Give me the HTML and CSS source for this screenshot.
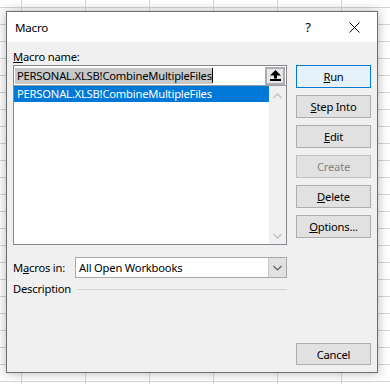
FILE: index.html
```html
<!DOCTYPE html>
<html lang="en">
<head>
    <meta charset="UTF-8">
    <title>Macro</title>
    <link rel="stylesheet" href="styles.css">
</head>
<body>
    <div class="dialog">
        <div class="titlebar">
            <span class="title">Macro</span>
            <span class="tb-btn help">?</span>
            <span class="tb-btn close">
                <svg width="11" height="11" viewBox="0 0 11 11"><path d="M0.5 0.5 L10.5 10.5 M10.5 0.5 L0.5 10.5" stroke="#000" stroke-width="1" fill="none"/></svg>
            </span>
        </div>
        <div class="content">
            <div class="left">
                <div class="label"><u>M</u>acro name:</div>
                <div class="combo">
                    <div class="edit">
                        <span class="sel">PERSONAL.XLSB!CombineMultipleFiles</span><span class="caret"></span>
                        <span class="upbtn">
                            <svg width="11" height="11" viewBox="0 0 11 11"><path d="M5.5 0 L11 5.5 H7 V8.5 H4 V5.5 H0 Z" fill="#000"/><rect x="0" y="9" width="11" height="2" fill="#000"/></svg>
                        </span>
                    </div>
                    <div class="list">
                        <div class="items">
                            <div class="item active">PERSONAL.XLSB!CombineMultipleFiles</div>
                        </div>
                        <div class="scroll">
                            <svg width="9" height="6" viewBox="0 0 9 6"><path d="M0.5 5 L4.5 1 L8.5 5" stroke="#c2c2c2" stroke-width="1.4" fill="none"/></svg>
                            <svg width="9" height="6" viewBox="0 0 9 6"><path d="M0.5 1 L4.5 5 L8.5 1" stroke="#c2c2c2" stroke-width="1.4" fill="none"/></svg>
                        </div>
                    </div>
                </div>
                <div class="row-in">
                    <span class="label">M<u>a</u>cros in:</span>
                    <div class="select">
                        <span class="select-text">All Open Workbooks</span>
                        <span class="drop">
                            <svg width="9" height="6" viewBox="0 0 9 6"><path d="M0.5 1 L4.5 5 L8.5 1" stroke="#606060" stroke-width="1.2" fill="none"/></svg>
                        </span>
                    </div>
                </div>
                <div class="row-desc">
                    <span class="label">Description</span>
                    <span class="rule"></span>
                </div>
            </div>
            <div class="right">
                <div class="btn default"><u>R</u>un</div>
                <div class="btn"><u>S</u>tep Into</div>
                <div class="btn"><u>E</u>dit</div>
                <div class="btn disabled">Create</div>
                <div class="btn"><u>D</u>elete</div>
                <div class="btn"><u>O</u>ptions...</div>
                <div class="btn cancel">Cancel</div>
            </div>
        </div>
    </div>
</body>
</html>
```

FILE: styles.css
```css
* {
    margin: 0;
    padding: 0;
    box-sizing: border-box;
}

body {
    width: 390px;
    height: 384px;
    overflow: hidden;
    padding: 11px 0 0 6px;
    font-family: "Noto Sans", "Open Sans", sans-serif;
    font-size: 11.2px;
    letter-spacing: -0.2px;
    color: #000;
    background-color: #fff;
    background-image:
        linear-gradient(to right, #d6d6d6 1px, transparent 1px),
        linear-gradient(to bottom, #d6d6d6 1px, transparent 1px);
    background-size: 64px 17px;
    background-position: 21px 7px;
}

u {
    text-decoration: underline;
    text-underline-offset: 1px;
}

.dialog {
    width: 372px;
    height: 362px;
    border: 1px solid #6e6e6e;
    background: #f0f0f0;
    box-shadow: 0 0 10px rgba(0, 0, 0, 0.3);
    display: flex;
    flex-direction: column;
}

.titlebar {
    height: 30px;
    background: #fff;
    display: flex;
    align-items: center;
    padding-left: 8px;
}

.title {
    flex: 1;
    font-size: 11.6px;
    padding-top: 1px;
}

.tb-btn {
    width: 46px;
    height: 30px;
    display: flex;
    align-items: center;
    justify-content: center;
}

.help {
    font-size: 13px;
}

.content {
    flex: 1;
    display: flex;
    gap: 9px;
    padding: 0 6px 0 6px;
}

.left {
    width: 274px;
    padding-top: 7px;
    display: flex;
    flex-direction: column;
}

.label {
    line-height: 16px;
    height: 16px;
    white-space: nowrap;
}

.combo {
    height: 180px;
    border: 1px solid #828790;
    display: flex;
    flex-direction: column;
    background: #fff;
}

.edit {
    height: 20px;
    border-bottom: 1px solid #9a9ca4;
    display: flex;
    align-items: center;
    padding-left: 1px;
}

.sel {
    background: #c8c8c8;
    line-height: 16px;
    padding-left: 2px;
    white-space: nowrap;
}

.caret {
    width: 1px;
    height: 15px;
    background: #000;
}

.upbtn {
    margin-left: auto;
    margin-right: 1px;
    width: 20px;
    height: 18px;
    border: 2px solid #adadad;
    background: #e9e9e9;
    display: flex;
    align-items: center;
    justify-content: center;
}

.list {
    flex: 1;
    display: flex;
}

.items {
    flex: 1;
}

.item {
    height: 16px;
    line-height: 16px;
    padding-left: 3px;
    white-space: nowrap;
}

.item.active {
    background: #0078d7;
    color: #fff;
}

.scroll {
    width: 17px;
    background: #f0f0f0;
    display: flex;
    flex-direction: column;
    justify-content: space-between;
    align-items: center;
    padding: 7px 0 5px;
}

.row-in {
    margin-top: 12px;
    display: flex;
    align-items: center;
    gap: 10px;
}

.select {
    flex: 1;
    height: 21px;
    border: 1px solid #a9a9a9;
    background: #fff;
    display: flex;
    align-items: center;
}

.select-text {
    flex: 1;
    padding-left: 3px;
}

.drop {
    width: 18px;
    height: 19px;
    background: #e1e1e1;
    border-left: 1px solid #c8c8c8;
    display: flex;
    align-items: center;
    justify-content: center;
}

.row-desc {
    margin-top: 3px;
    display: flex;
    align-items: center;
    gap: 6px;
}

.rule {
    flex: 1;
    height: 1px;
    background: #d5d5d5;
}

.right {
    width: 75px;
    padding-top: 23px;
    padding-bottom: 7px;
    display: flex;
    flex-direction: column;
    gap: 7px;
}

.btn {
    height: 23px;
    border: 1px solid #adadad;
    background: #e1e1e1;
    display: flex;
    align-items: center;
    justify-content: center;
    white-space: nowrap;
}

.btn.default {
    border-color: #0078d7;
    background: #e5f1fb;
}

.btn.disabled {
    color: #838383;
    border-color: #bfbfbf;
    background: #e1e1e1;
}

.btn.cancel {
    margin-top: auto;
    height: 22px;
}
```
